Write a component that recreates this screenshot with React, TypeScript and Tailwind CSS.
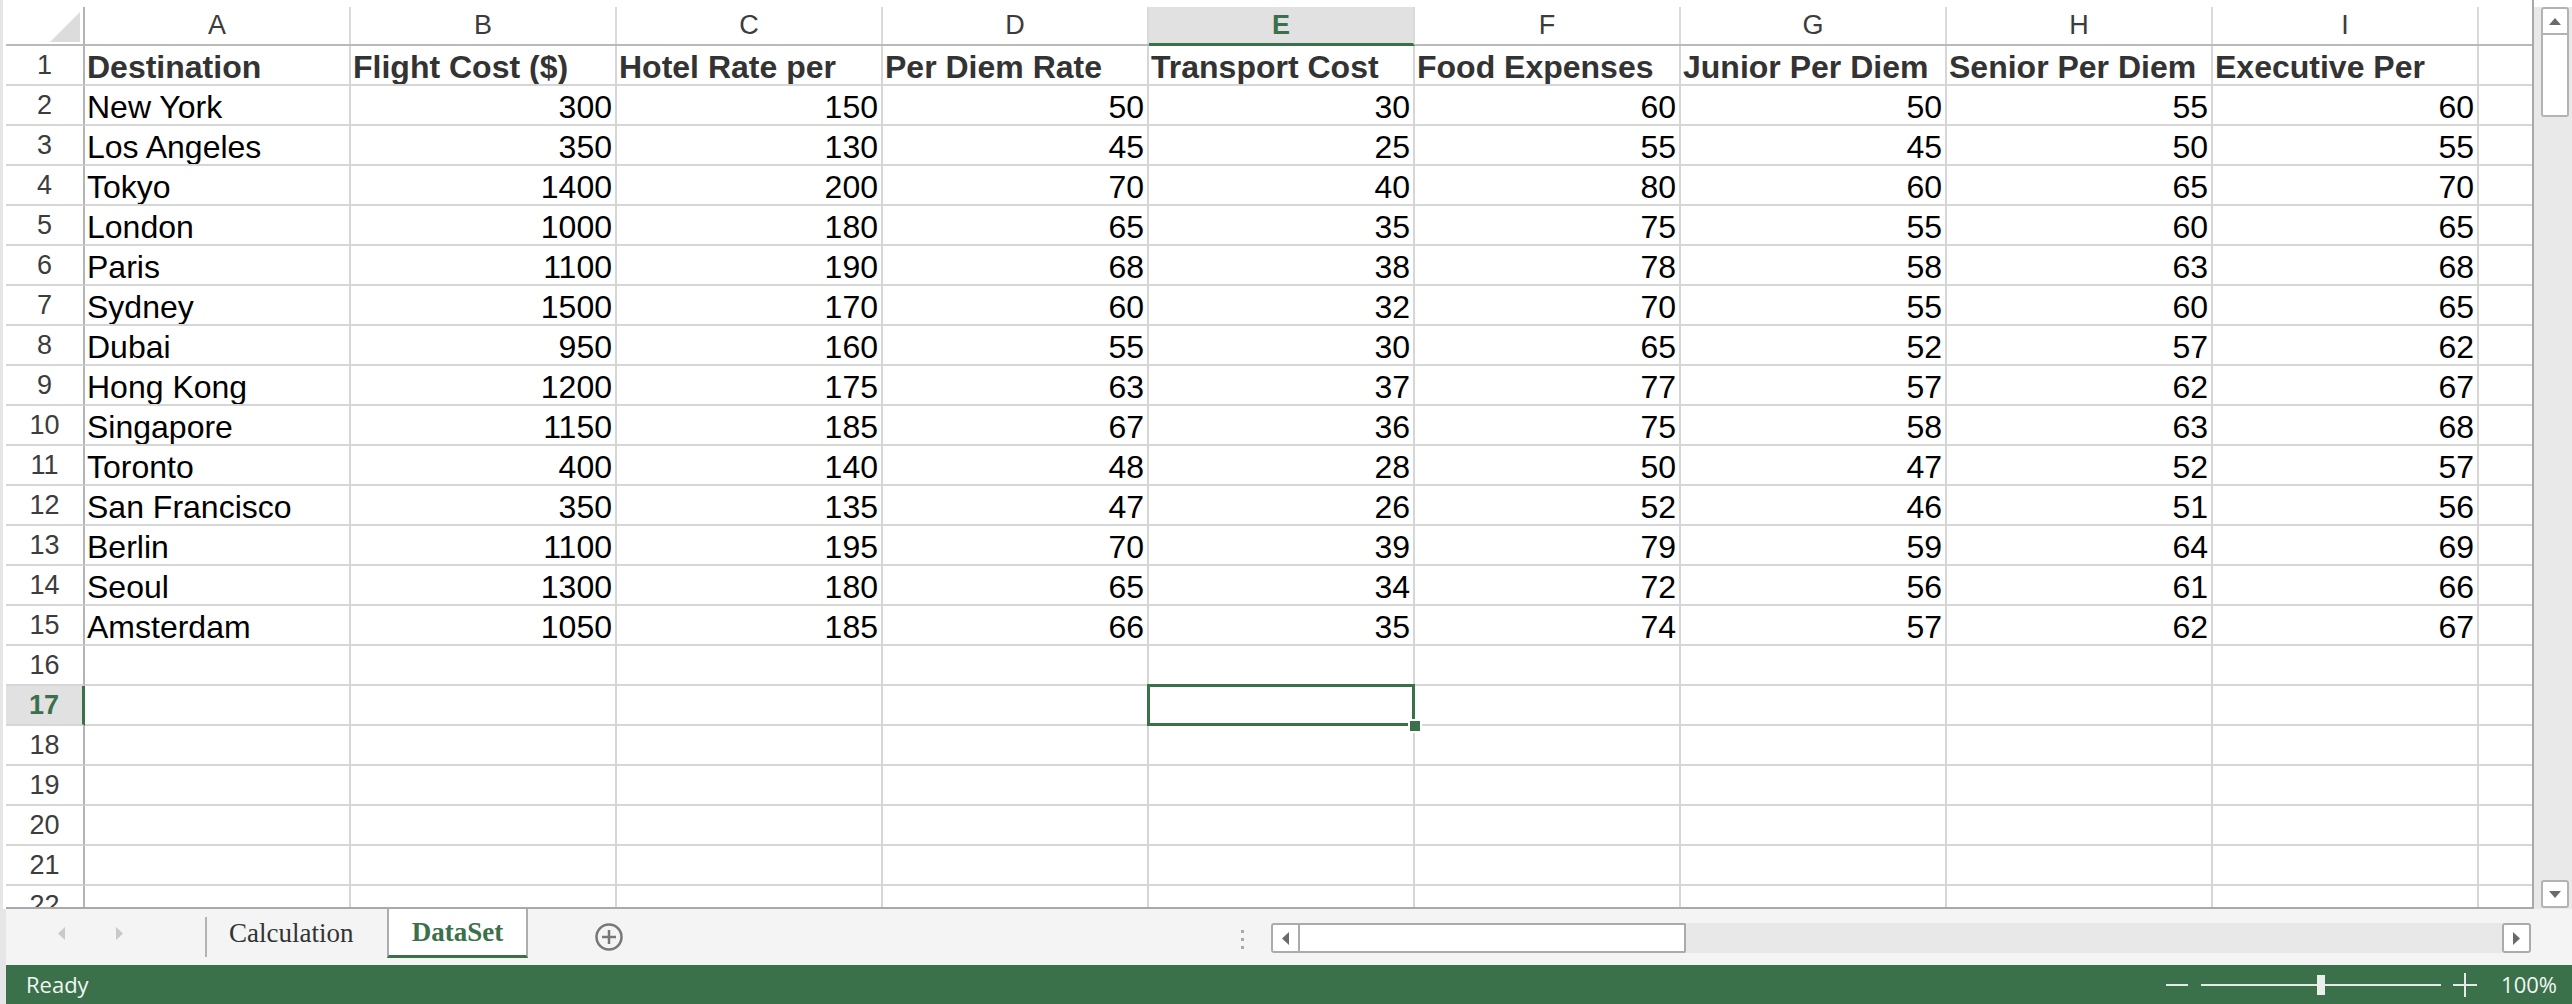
import React from 'react';

const COLS = ['A', 'B', 'C', 'D', 'E', 'F', 'G', 'H', 'I'];
const HEAD = [
  'Destination',
  'Flight Cost ($)',
  'Hotel Rate per',
  'Per Diem Rate',
  'Transport Cost',
  'Food Expenses',
  'Junior Per Diem',
  'Senior Per Diem',
  'Executive Per',
];
const DATA: (string | number)[][] = [
  ['New York', 300, 150, 50, 30, 60, 50, 55, 60],
  ['Los Angeles', 350, 130, 45, 25, 55, 45, 50, 55],
  ['Tokyo', 1400, 200, 70, 40, 80, 60, 65, 70],
  ['London', 1000, 180, 65, 35, 75, 55, 60, 65],
  ['Paris', 1100, 190, 68, 38, 78, 58, 63, 68],
  ['Sydney', 1500, 170, 60, 32, 70, 55, 60, 65],
  ['Dubai', 950, 160, 55, 30, 65, 52, 57, 62],
  ['Hong Kong', 1200, 175, 63, 37, 77, 57, 62, 67],
  ['Singapore', 1150, 185, 67, 36, 75, 58, 63, 68],
  ['Toronto', 400, 140, 48, 28, 50, 47, 52, 57],
  ['San Francisco', 350, 135, 47, 26, 52, 46, 51, 56],
  ['Berlin', 1100, 195, 70, 39, 79, 59, 64, 69],
  ['Seoul', 1300, 180, 65, 34, 72, 56, 61, 66],
  ['Amsterdam', 1050, 185, 66, 35, 74, 57, 62, 67],
];

function ColumnHeader() {
  return (
    <div className="flex h-[39px] shrink-0 border-b-2 border-[#b9b9b9]">
      <div className="relative w-[79px] shrink-0 border-r-2 border-[#b4b4b4]">
        <svg className="absolute left-[44px] top-[5px]" width="30" height="30" viewBox="0 0 30 30">
          <polygon points="30,0 30,30 0,30" fill="#dcdcdc" />
        </svg>
      </div>
      {COLS.map((c) =>
        c === 'E' ? (
          <div
            key={c}
            className="w-[266px] shrink-0 border-r-2 border-[#dadada] bg-[#e1e1e1] border-b-[3px] border-b-[#3b714a] -mb-[2px] flex items-center justify-center text-[27px] font-bold text-[#3b714a]"
          >
            {c}
          </div>
        ) : (
          <div
            key={c}
            className="w-[266px] shrink-0 border-r-2 border-[#dadada] flex items-center justify-center text-[27px] text-[#3c3c3c]"
          >
            {c}
          </div>
        )
      )}
      <div className="w-[53px] shrink-0" />
    </div>
  );
}

function Row({ r }: { r: number }) {
  const data = r === 1 ? HEAD : r >= 2 && r <= 15 ? DATA[r - 2] : null;
  const selRow = r === 17;
  return (
    <div className="flex h-[40px] shrink-0">
      {selRow ? (
        <div className="w-[79px] shrink-0 border-b-2 border-b-[#d6d6d6] border-r-[3px] border-r-[#3b714a] bg-[#e1e1e1] flex items-center justify-center text-[27px] font-bold text-[#3b714a]">
          {r}
        </div>
      ) : (
        <div className="w-[79px] shrink-0 border-b-2 border-b-[#d6d6d6] border-r-2 border-r-[#b4b4b4] flex items-center justify-center text-[27px] text-[#3c3c3c]">
          {r}
        </div>
      )}
      {COLS.map((c, i) => {
        const v = data ? data[i] : '';
        const isNum = typeof v === 'number';
        const selected = selRow && c === 'E';
        return (
          <div
            key={c}
            className={
              r === 1
                ? 'w-[266px] shrink-0 border-r-2 border-b-2 border-[#d6d6d6] overflow-hidden whitespace-nowrap pl-[2px] pr-[3px] pt-[5px] leading-[33px] text-[32px] font-bold text-[#333333]'
                : isNum
                ? 'w-[266px] shrink-0 border-r-2 border-b-2 border-[#d6d6d6] overflow-hidden whitespace-nowrap pl-[2px] pr-[3px] pt-[5px] leading-[33px] text-[32px] text-right text-black'
                : selected
                ? 'relative z-10 w-[266px] shrink-0 border-r-2 border-b-2 border-[#d6d6d6] pl-[2px] pr-[3px] pt-[5px] leading-[33px] text-[32px] text-black'
                : 'w-[266px] shrink-0 border-r-2 border-b-2 border-[#d6d6d6] overflow-hidden whitespace-nowrap pl-[2px] pr-[3px] pt-[5px] leading-[33px] text-[32px] text-black'
            }
          >
            {v}
            {selected && (
              <>
                <div className="absolute -left-[2px] -top-[2px] w-[268px] h-[42px] border-[3px] border-[#3b714a]" />
                <div className="absolute left-[259px] top-[33px] w-[14px] h-[14px] bg-white p-[2px]">
                  <div className="w-[10px] h-[10px] bg-[#3b714a]" />
                </div>
              </>
            )}
          </div>
        );
      })}
      <div className="w-[53px] shrink-0 border-b-2 border-[#d6d6d6]" />
    </div>
  );
}

function VScroll() {
  return (
    <div className="w-[38px] shrink-0 flex flex-col">
      <div className="h-[7px] bg-white" />
      <div className="flex-1 bg-[#e9e9e9] flex flex-col pl-[7px] pr-[3px] pb-[1px]">
        <div className="h-[28px] bg-white border-2 border-[#b3b3b3] rounded-t-[3px] flex items-center justify-center">
          <svg width="12" height="7" viewBox="0 0 12 7">
            <polygon points="0,7 6,0 12,7" fill="#6a6a6a" />
          </svg>
        </div>
        <div className="h-[82px] bg-white border-2 border-t-0 border-[#b3b3b3] rounded-b-[3px]" />
        <div className="flex-1" />
        <div className="h-[28px] bg-white border-2 border-[#b3b3b3] rounded-[3px] flex items-center justify-center">
          <svg width="12" height="7" viewBox="0 0 12 7">
            <polygon points="0,0 12,0 6,7" fill="#6a6a6a" />
          </svg>
        </div>
      </div>
    </div>
  );
}

function TabBar() {
  return (
    <div className="flex h-[56px] shrink-0">
      <div className="w-[6px] shrink-0 bg-[#e6e6e8]" />
      <div className="flex-1 flex items-start bg-[#f4f4f4]">
        <div className="w-[199px] shrink-0 h-[49px] flex items-center pl-[52px]">
          <svg width="7" height="13" viewBox="0 0 7 13">
            <polygon points="7,0 7,13 0,6.5" fill="#c9c9c9" />
          </svg>
          <svg className="ml-[51px]" width="7" height="13" viewBox="0 0 7 13">
            <polygon points="0,0 0,13 7,6.5" fill="#c9c9c9" />
          </svg>
        </div>
        <div className="w-[2px] shrink-0 h-[40px] mt-[8px] bg-[#b3b3b3]" />
        <div className="w-[180px] shrink-0 h-[49px] flex items-center pl-[22px] font-['Liberation_Serif',serif] text-[27px] text-[#333333]">
          Calculation
        </div>
        <div className="w-[141px] shrink-0 h-[49px] bg-white border-l-2 border-r-2 border-[#adadad] border-b-[3px] border-b-[#3b714a] flex items-center justify-center font-['Liberation_Serif',serif] text-[27px] font-bold text-[#3b714a]">
          DataSet
        </div>
        <svg className="ml-[67px] mt-[14px] shrink-0" width="28" height="28" viewBox="0 0 28 28">
          <circle cx="14" cy="14" r="12.5" fill="none" stroke="#777777" strokeWidth="2.5" />
          <line x1="14" y1="7" x2="14" y2="21" stroke="#777777" strokeWidth="2.5" />
          <line x1="7" y1="14" x2="21" y2="14" stroke="#777777" strokeWidth="2.5" />
        </svg>
        <div className="ml-[618px] mt-[21px] shrink-0 flex flex-col gap-[5px]">
          <div className="w-[3px] h-[3px] bg-[#aaaaaa]" />
          <div className="w-[3px] h-[3px] bg-[#aaaaaa]" />
          <div className="w-[3px] h-[3px] bg-[#aaaaaa]" />
        </div>
        <div className="ml-[27px] mt-[14px] h-[30px] w-[1260px] shrink-0 flex">
          <div className="w-[29px] bg-white border-2 border-[#ababab] rounded-l-[3px] flex items-center justify-center">
            <svg width="7" height="13" viewBox="0 0 7 13">
              <polygon points="7,0 7,13 0,6.5" fill="#6a6a6a" />
            </svg>
          </div>
          <div className="w-[386px] bg-white border-2 border-l-0 border-[#ababab] rounded-r-[2px]" />
          <div className="flex-1 bg-[#e8e8e8]" />
          <div className="w-[29px] bg-white border-2 border-[#ababab] rounded-[3px] flex items-center justify-center">
            <svg width="7" height="13" viewBox="0 0 7 13">
              <polygon points="0,0 0,13 7,6.5" fill="#6a6a6a" />
            </svg>
          </div>
        </div>
      </div>
    </div>
  );
}

function StatusBar() {
  return (
    <div className="flex h-[39px] shrink-0">
      <div className="w-[6px] shrink-0 bg-[#e6e6e8]" />
      <div className="flex-1 flex items-center bg-[#3b714a] pl-[20px] pr-[15px] text-[22px] text-[#f2f5f3] font-['Open_Sans',sans-serif]">
        <span>Ready</span>
        <div className="flex-1" />
        <div className="w-[22px] h-[2px] bg-[#e4ebe6]" />
        <div className="ml-[13px] flex items-center">
          <div className="w-[116px] h-[2px] bg-[#e4ebe6]" />
          <div className="w-[8px] h-[20px] bg-[#e9efea]" />
          <div className="w-[116px] h-[2px] bg-[#e4ebe6]" />
        </div>
        <svg className="ml-[12px]" width="24" height="24" viewBox="0 0 24 24">
          <line x1="12" y1="0" x2="12" y2="24" stroke="#e4ebe6" strokeWidth="2" />
          <line x1="0" y1="12" x2="24" y2="12" stroke="#e4ebe6" strokeWidth="2" />
        </svg>
        <span className="ml-[24px]">100%</span>
      </div>
    </div>
  );
}

export default function App() {
  const rows = [];
  for (let r = 1; r <= 22; r++) rows.push(<Row key={r} r={r} />);
  return (
    <div className="w-[2572px] h-[1004px] flex flex-col overflow-hidden bg-white font-['Liberation_Sans',Arial,sans-serif]">
      <div className="flex h-[909px] shrink-0">
        <div className="w-[3px] shrink-0 bg-[#e6e6e8]" />
        <div className="w-[3px] shrink-0 bg-white" />
        <div className="w-[2528px] shrink-0 flex flex-col border-r-2 border-b-2 border-[#a9a9a9] overflow-hidden">
          <div className="h-[7px] shrink-0" />
          <ColumnHeader />
          {rows}
        </div>
        <VScroll />
      </div>
      <TabBar />
      <StatusBar />
    </div>
  );
}
